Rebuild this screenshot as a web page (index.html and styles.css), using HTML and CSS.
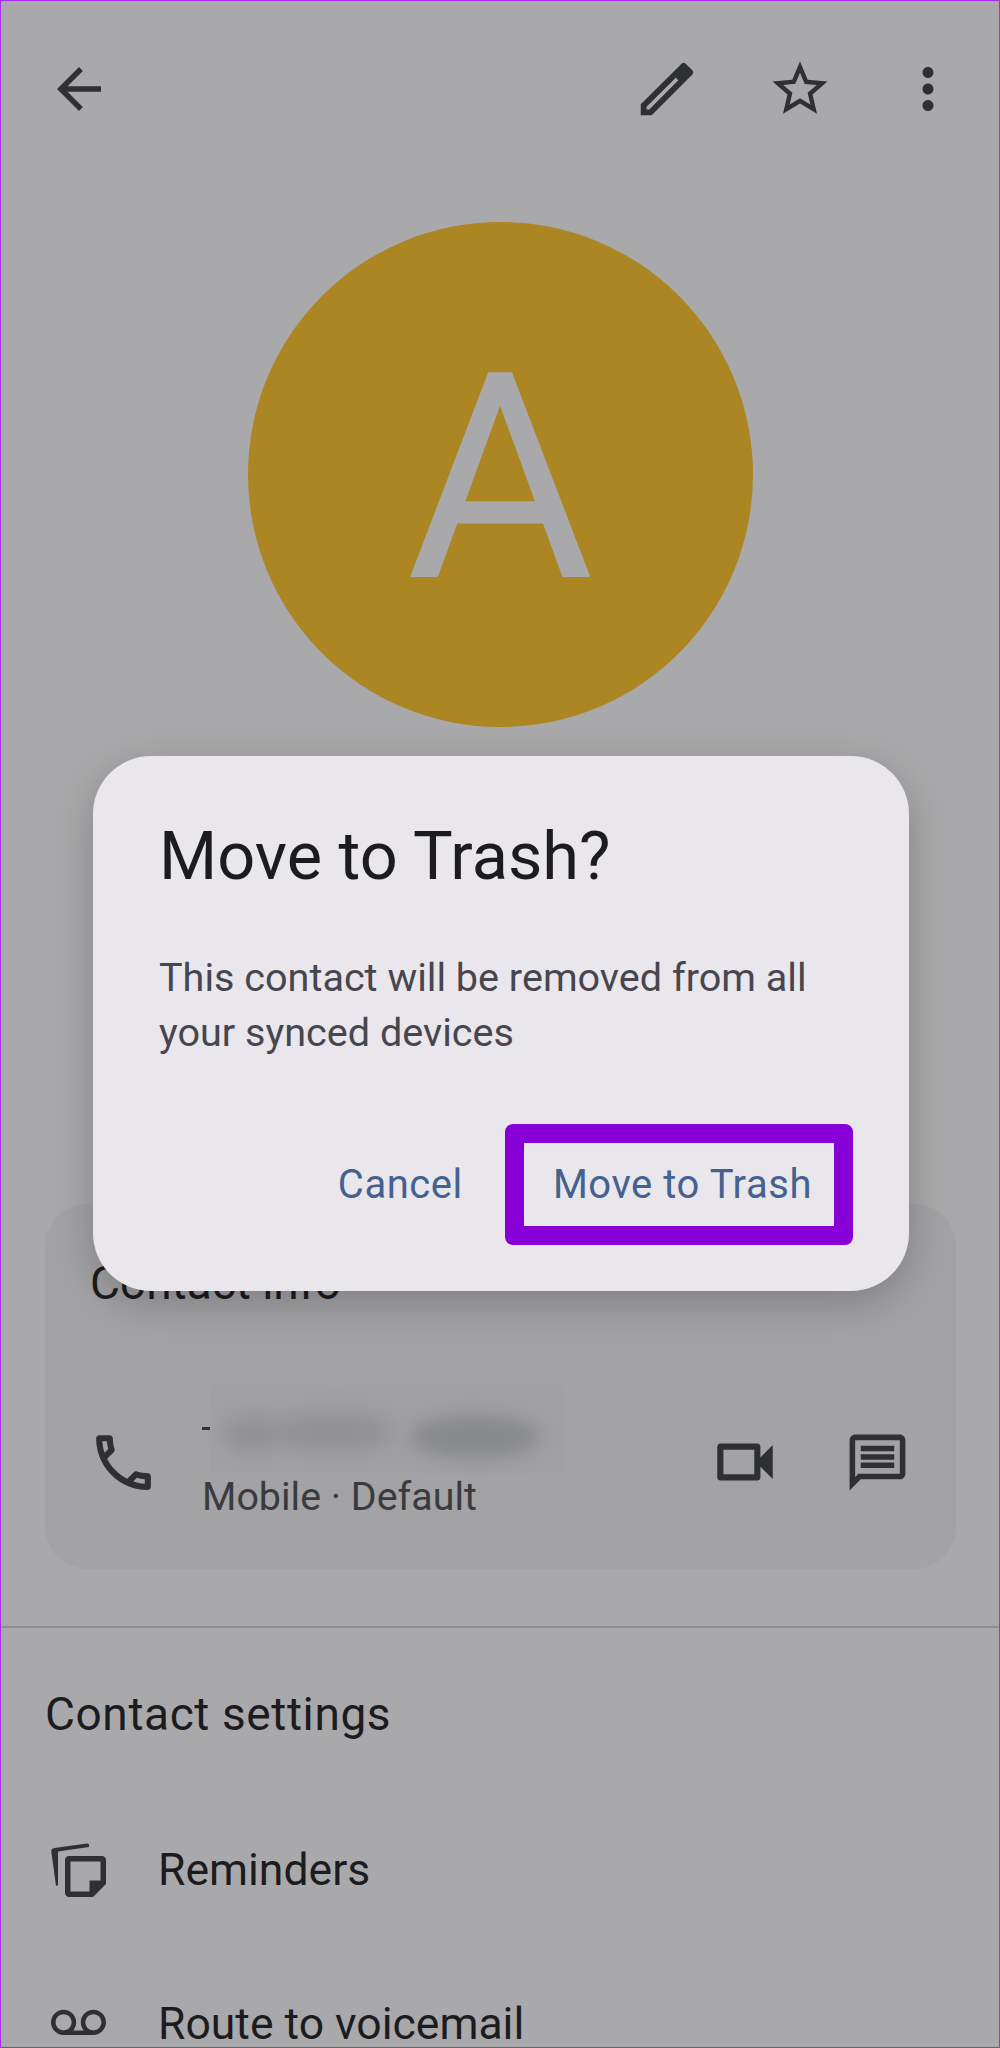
FILE: index.html
```html
<!DOCTYPE html>
<html>
<head>
    <title>Contact</title>
    <link rel="stylesheet" href="styles.css">
</head>

<body>
    <div class="screen">
        <!-- Top bar -->
        <div class="topbar">
            <svg class="icon-back" viewBox="0 0 24 24"><path d="M20 11H7.83l5.59-5.59L12 4l-8 8 8 8 1.41-1.41L7.83 13H20v-2z"/></svg>
            <div class="topbar-actions">
                <svg class="icon-edit" viewBox="0 0 24 24"><path fill-rule="evenodd" d="M3 21v-3.750L17 3.300c.4-.4 1-.4 1.400 0l2.300 2.300c.4.4.4 1 0 1.400L6.750 21zM5 19h.92L15.900 9 15 8.100 5 18.080z"/></svg>
                <svg class="icon-star" viewBox="0 0 24 24"><path d="M22 9.24l-7.19-.62L12 2 9.19 8.63 2 9.24l5.46 4.73L5.82 21 12 17.27 18.18 21l-1.63-7.03L22 9.24zM12 15.4l-3.76 2.27 1-4.28-3.32-2.88 4.38-.38L12 6.1l1.71 4.04 4.38.38-3.32 2.88 1 4.28L12 15.4z"/></svg>
                <svg class="icon-more" viewBox="0 0 24 24"><path d="M12 8c1.1 0 2-.9 2-2s-.9-2-2-2-2 .9-2 2 .9 2 2 2zm0 2c-1.1 0-2 .9-2 2s.9 2 2 2 2-.9 2-2-.9-2-2-2zm0 6c-1.1 0-2 .9-2 2s.9 2 2 2 2-.9 2-2-.9-2-2-2z"/></svg>
            </div>
        </div>

        <div class="avatar">A</div>

        <!-- Contact info card, mostly under the dialog -->
        <div class="card">
            <div class="card-title">Contact info</div>
            <div class="phone-row">
                <svg class="icon-call" viewBox="0 0 24 24"><path d="M6.54 5c.06.89.21 1.76.45 2.59l-1.2 1.2c-.41-1.2-.67-2.47-.76-3.79h1.51m9.86 12.02c.85.24 1.72.39 2.6.45v1.49c-1.32-.09-2.59-.35-3.8-.75l1.2-1.19M7.5 3H4c-.55 0-1 .45-1 1 0 9.39 7.61 17 17 17 .55 0 1-.45 1-1v-3.49c0-.55-.45-1-1-1-1.24 0-2.45-.2-3.57-.57-.1-.04-.21-.05-.31-.05-.26 0-.51.1-.71.29l-2.2 2.2c-2.83-1.45-5.15-3.76-6.59-6.59l2.2-2.2c.28-.28.36-.67.25-1.02C8.7 6.45 8.5 5.25 8.5 4c0-.55-.45-1-1-1z"/></svg>
                <div class="phone-text">
                    <div class="phone-number">
                        <span class="dash"></span>
                        <div class="blur-patch">
                            <span class="blob blob-a"></span>
                            <span class="blob blob-b"></span>
                            <span class="blob blob-c"></span>
                        </div>
                    </div>
                    <div class="phone-type">Mobile · Default</div>
                </div>
                <svg class="icon-video" viewBox="0 0 24 24"><path d="M15 8v8H5V8h10m1-2H4c-.55 0-1 .45-1 1v10c0 .55.45 1 1 1h12c.55 0 1-.45 1-1v-3.5l4 4v-11l-4 4V7c0-.55-.45-1-1-1z"/></svg>
                <svg class="icon-message" viewBox="0 0 24 24"><path d="M20 2H4c-1.1 0-1.99.9-1.99 2L2 22l4-4h14c1.1 0 2-.9 2-2V4c0-1.1-.9-2-2-2zm0 14H5.17L4 17.17V4h16v12zM6 12h12v2H6zm0-3h12v2H6zm0-3h12v2H6z"/></svg>
            </div>
        </div>

        <div class="divider"></div>

        <!-- Contact settings list -->
        <div class="settings">
            <div class="settings-title">Contact settings</div>
            <div class="settings-row settings-row-first">
                <svg class="icon-note" viewBox="0 0 55 55">
                    <path d="M36 1.500 3.500 6c-2 .3-3.400 1.500-3.200 3.500L5 44l2-1V9.500L38 5c.5-2-.2-3.700-2-3.500z"/>
                    <path fill-rule="evenodd" d="M18 14h33c2.200 0 4 1.800 4 4v24L42 55H18c-2.200 0-4-1.800-4-4V18c0-2.200 1.800-4 4-4zm1.500 5.500v30h19V38.500h11v-19z"/>
                </svg>
                <span>Reminders</span>
            </div>
            <div class="settings-row">
                <svg class="icon-voicemail" viewBox="0 0 24 24"><path d="M18.500 6C15.460 6 13 8.460 13 11.500c0 1.330.47 2.550 1.260 3.500H9.740c.79-.95 1.260-2.170 1.260-3.500C11 8.460 8.540 6 5.500 6S0 8.460 0 11.500 2.460 17 5.500 17h13c3.040 0 5.500-2.460 5.500-5.500S21.540 6 18.500 6zm-13 9C3.570 15 2 13.430 2 11.500S3.570 8 5.500 8 9 9.570 9 11.500 7.430 15 5.500 15zm13 0c-1.930 0-3.500-1.570-3.500-3.500S16.570 8 18.500 8 22 9.570 22 11.500 20.430 15 18.500 15z"/></svg>
                <span>Route to voicemail</span>
            </div>
        </div>

        <!-- Confirm dialog -->
        <div class="dialog">
            <h1 class="dialog-title">Move to Trash?</h1>
            <p class="dialog-text">This contact will be removed from all your synced devices</p>
            <div class="dialog-actions">
                <span class="dialog-btn">Cancel</span>
                <span class="dialog-btn dialog-btn-marked">Move to Trash</span>
            </div>
        </div>
    </div>
</body>
</html>
```

FILE: styles.css
```css
* {
    box-sizing: border-box;
}

body {
    margin: 0;
    font-family: Roboto, "Noto Sans", sans-serif;
    background-color: #a9a9ab;
}

.screen {
    position: relative;
    width: 1000px;
    height: 2048px;
    overflow: hidden;
    background-color: #a9a9ab;
    border: 1px solid #a52cf0;
}

svg {
    display: block;
    flex: none;
    fill: #2f3033;
}

/* Top bar */
.topbar {
    display: flex;
    justify-content: space-between;
    align-items: center;
    height: 66px;
    margin-top: 55px;
    padding: 0 38px 0 45px;
}

.topbar-actions {
    display: flex;
    align-items: center;
    gap: 62px;
}

.icon-back,
.icon-more,
.icon-star {
    width: 66px;
    height: 66px;
}

.icon-edit {
    width: 70px;
    height: 70px;
    margin-right: 3px;
}

/* Avatar */
.avatar {
    width: 505px;
    height: 505px;
    margin: 100px auto 0;
    border-radius: 50%;
    background-color: #ab8623;
    color: #a9a9ab;
    font-size: 288px;
    line-height: 514px;
    text-align: center;
}

/* Card */
.card {
    width: 911px;
    height: 365px;
    margin: 477px 0 0 44px;
    padding: 55px 45px 0;
    border-radius: 42px;
    background-color: #a3a3a5;
}

.card-title {
    font-size: 46px;
    line-height: 48px;
    color: #1c1c1f;
}

.phone-row {
    display: flex;
    align-items: center;
    margin-top: 98px;
    margin-left: -3px;
}

.icon-call {
    width: 73px;
    height: 73px;
}

.phone-text {
    flex: 1;
    margin-left: 42px;
}

.phone-number {
    display: flex;
    height: 70px;
}

.dash {
    width: 8px;
    height: 3px;
    margin-top: 22px;
    background-color: #2f3033;
}

.blur-patch {
    position: relative;
    width: 355px;
    height: 88px;
    margin-top: -20px;
    background-color: #a1a1a3;
}

.blob {
    position: absolute;
    border-radius: 50%;
    filter: blur(9px);
    background-color: #929295;
}

.blob-a {
    left: 12px;
    top: 30px;
    width: 60px;
    height: 38px;
}

.blob-b {
    left: 62px;
    top: 26px;
    width: 122px;
    height: 42px;
}

.blob-c {
    left: 200px;
    top: 30px;
    width: 130px;
    height: 44px;
    background-color: #88898d;
}

.phone-type {
    font-size: 39.4px;
    line-height: 44px;
    color: #3a3b3e;
}

.icon-video {
    width: 74px;
    height: 74px;
    margin-right: 62px;
}

.icon-message {
    width: 67px;
    height: 67px;
}

.divider {
    height: 2px;
    margin-top: 57px;
    background-color: #8f8f91;
}

/* Settings list */
.settings {
    padding: 61px 0 0 44px;
}

.settings-title {
    font-size: 46px;
    letter-spacing: 0.6px;
    line-height: 50px;
    color: #1c1c1f;
}

.settings-row {
    display: flex;
    align-items: center;
    height: 55px;
    margin-top: 99px;
    font-size: 44.5px;
    color: #1c1c1f;
}

.settings-row-first {
    margin-top: 103px;
}

.settings-row span {
    margin-left: 52px;
}

.icon-note,
.icon-voicemail {
    width: 55px;
    height: 55px;
    margin-left: 6px;
}

/* Dialog */
.dialog {
    position: absolute;
    left: 92px;
    top: 755px;
    width: 816px;
    height: 535px;
    padding: 62px 56px 0 66px;
    border-radius: 58px;
    background-color: #e9e7ec;
    box-shadow: 0 12px 40px rgba(0, 0, 0, 0.22);
}

.dialog-title {
    margin: 0;
    font-size: 66.7px;
    font-weight: 400;
    line-height: 76px;
    color: #1c1b1f;
}

.dialog-text {
    margin: 56px 0 0;
    font-size: 39.6px;
    line-height: 55px;
    color: #47464f;
}

.dialog-actions {
    display: flex;
    justify-content: flex-end;
    align-items: center;
    margin-top: 64px;
}

.dialog-btn {
    padding: 0 42px 0 0;
    font-size: 40px;
    letter-spacing: 0.55px;
    line-height: 83px;
    color: #45618f;
}

.dialog-btn-marked {
    padding: 0 22px 0 29px;
    border: 19px solid #8800d8;
    border-radius: 8px;
}
```
